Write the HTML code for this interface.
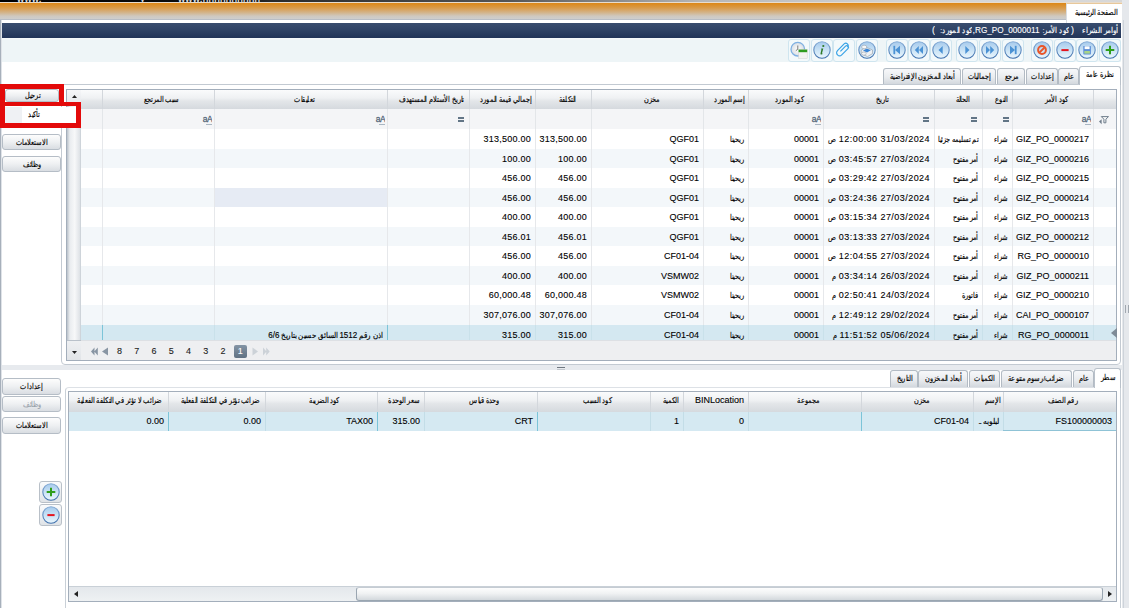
<!DOCTYPE html><html><head><meta charset="utf-8"><style>
*{box-sizing:content-box}
html,body{margin:0;padding:0}
body{width:1129px;height:608px;overflow:hidden;position:relative;background:#fff;font-family:"Liberation Sans",sans-serif;font-size:9px;color:#000}
body>div{position:absolute}
.t{white-space:nowrap;overflow:hidden;-webkit-text-stroke:0.1px currentColor}
.a{font-size:7.6px;display:inline-block;-webkit-text-stroke:0.15px currentColor}
.rtl{direction:rtl}
</style></head><body><div style="left:0px;top:0px;width:1129px;height:2px;background:linear-gradient(90deg,#000 0%,#111 21%,#2a2a2a 24%,#555 45%,#b5b5b5 62%,#d4d4d4 80%,#d8d8d8 100%)"></div>
<div style="left:0px;top:2px;width:1122px;height:1px;background:#e9dccb"></div>
<div style="left:0px;top:3px;width:1122px;height:16px;background:linear-gradient(180deg,#dc8716 0%,#d99a48 30%,#d3b48a 60%,#cfc9c0 82%,#cdcdcd 100%)"></div>
<div style="left:0px;top:19px;width:1122px;height:1px;background:#b9bec5"></div>
<div style="left:0px;top:20px;width:1122px;height:3px;background:#fff"></div>
<div style="left:1122px;top:0px;width:7px;height:608px;background:#e5e8ec"></div>
<div style="left:1123px;top:20px;width:1px;height:588px;background:#cdd3da"></div>
<div style="left:1066px;top:3px;width:56px;height:20px;background:#fff;border-top:1px solid #e8c89a;border-left:1px solid #d9dde2;box-sizing:border-box"></div>
<div class="t" style="left:1066px;top:4px;width:51px;height:16px;line-height:16px;text-align:right;padding-right:5px;direction:rtl"><span class="a" style="transform:scaleX(0.82);transform-origin:100% 50%;font-size:7.8px">الصفحة الرئيسية</span></div>
<div style="left:0px;top:20px;width:1px;height:588px;background:#a7b0bb"></div>
<div style="left:1px;top:20px;width:1px;height:588px;background:#dfe3e8"></div>
<div style="left:2px;top:23px;width:1119px;height:15px;background:linear-gradient(180deg,#394d6e 0%,#2e4265 50%,#213458 100%)"></div>
<div class="t" style="left:918px;top:23px;width:200px;height:15px;line-height:15px;text-align:right;color:#fff;font-size:9px;direction:rtl;"><span class="a" style="transform:scaleX(0.92);transform-origin:100% 50%;font-size:8px">أوامر الشراء</span></div>
<div class="t" style="left:874px;top:23px;width:200px;height:15px;line-height:15px;text-align:right;color:#fff;font-size:9px;">)</div>
<div class="t" style="left:869px;top:23px;width:200px;height:15px;line-height:15px;text-align:right;color:#fff;font-size:9px;direction:rtl;"><span class="a" style="transform:scaleX(0.86);transform-origin:100% 50%;font-size:8px">كود الأمر:</span></div>
<div class="t" style="left:839.5px;top:23px;width:200px;height:15px;line-height:15px;text-align:right;color:#fff;font-size:8.2px;">RG_PO_0000011</div>
<div class="t" style="left:775px;top:23px;width:200px;height:15px;line-height:15px;text-align:right;color:#fff;font-size:9px;">,</div>
<div class="t" style="left:772px;top:23px;width:200px;height:15px;line-height:15px;text-align:right;color:#fff;font-size:9px;direction:rtl;"><span class="a" style="transform:scaleX(0.86);transform-origin:100% 50%;font-size:8px">كود المورد:</span></div>
<div class="t" style="left:735px;top:23px;width:200px;height:15px;line-height:15px;text-align:right;color:#fff;font-size:9px;">(</div>
<div style="left:2px;top:38px;width:1119px;height:24px;background:linear-gradient(180deg,#f6fafb 0px,#eef5f7 2px,#eef5f7 100%)"></div>
<div style="left:1099px;top:39px;width:22px;height:23px;border:1px solid #cfe5ef;border-radius:3px;background:#f3f9fb;box-sizing:border-box"></div>
<svg style="position:absolute;left:1101px;top:41px" width="18" height="18" viewBox="0 0 18 18"><defs><linearGradient id="cg1" x1="0" y1="0" x2="0" y2="1"><stop offset="0" stop-color="#a6caec"/><stop offset="0.55" stop-color="#cce4f6"/><stop offset="1" stop-color="#eaf6fd"/></linearGradient><linearGradient id="cs1" x1="0" y1="0" x2="0" y2="1"><stop offset="0" stop-color="#86acd6"/><stop offset="1" stop-color="#3d6fac"/></linearGradient></defs><circle cx="9" cy="9" r="8.2" fill="url(#cg1)" stroke="url(#cs1)" stroke-width="1.1"/><path d="M8 4.7h2v3.3h3.3v2H10v3.3H8V10H4.7V8H8z" fill="#2f9e1c"/></svg>
<div style="left:1076px;top:39px;width:22px;height:23px;border:1px solid #cfe5ef;border-radius:3px;background:#f3f9fb;box-sizing:border-box"></div>
<svg style="position:absolute;left:1078px;top:41px" width="18" height="18" viewBox="0 0 18 18"><defs><linearGradient id="cg2" x1="0" y1="0" x2="0" y2="1"><stop offset="0" stop-color="#a6caec"/><stop offset="0.55" stop-color="#cce4f6"/><stop offset="1" stop-color="#eaf6fd"/></linearGradient><linearGradient id="cs2" x1="0" y1="0" x2="0" y2="1"><stop offset="0" stop-color="#86acd6"/><stop offset="1" stop-color="#3d6fac"/></linearGradient></defs><circle cx="9" cy="9" r="8.2" fill="url(#cg2)" stroke="url(#cs2)" stroke-width="1.1"/><rect x="5.3" y="5" width="7.6" height="8.4" rx="0.6" fill="#5d8fd8"/><rect x="6.6" y="5.3" width="5" height="2.8" fill="#fff"/><rect x="6.3" y="10" width="5.6" height="2.6" fill="#a8d486"/></svg>
<div style="left:1054px;top:39px;width:22px;height:23px;border:1px solid #cfe5ef;border-radius:3px;background:#f3f9fb;box-sizing:border-box"></div>
<svg style="position:absolute;left:1056px;top:41px" width="18" height="18" viewBox="0 0 18 18"><defs><linearGradient id="cg3" x1="0" y1="0" x2="0" y2="1"><stop offset="0" stop-color="#a6caec"/><stop offset="0.55" stop-color="#cce4f6"/><stop offset="1" stop-color="#eaf6fd"/></linearGradient><linearGradient id="cs3" x1="0" y1="0" x2="0" y2="1"><stop offset="0" stop-color="#86acd6"/><stop offset="1" stop-color="#3d6fac"/></linearGradient></defs><circle cx="9" cy="9" r="8.2" fill="url(#cg3)" stroke="url(#cs3)" stroke-width="1.1"/><rect x="5.4" y="8.1" width="7.2" height="2" fill="#e4151f"/></svg>
<div style="left:1031px;top:39px;width:22px;height:23px;border:1px solid #cfe5ef;border-radius:3px;background:#f3f9fb;box-sizing:border-box"></div>
<svg style="position:absolute;left:1033px;top:41px" width="18" height="18" viewBox="0 0 18 18"><defs><linearGradient id="cg4" x1="0" y1="0" x2="0" y2="1"><stop offset="0" stop-color="#a6caec"/><stop offset="0.55" stop-color="#cce4f6"/><stop offset="1" stop-color="#eaf6fd"/></linearGradient><linearGradient id="cs4" x1="0" y1="0" x2="0" y2="1"><stop offset="0" stop-color="#86acd6"/><stop offset="1" stop-color="#3d6fac"/></linearGradient></defs><circle cx="9" cy="9" r="8.2" fill="url(#cg4)" stroke="url(#cs4)" stroke-width="1.1"/><circle cx="9" cy="9" r="3.9" fill="none" stroke="#e8552a" stroke-width="2"/><path d="M6.5 11.5L11.5 6.5" stroke="#e8552a" stroke-width="1.8"/></svg>
<div style="left:1002px;top:39px;width:22px;height:23px;border:1px solid #cfe5ef;border-radius:3px;background:#f3f9fb;box-sizing:border-box"></div>
<svg style="position:absolute;left:1004px;top:41px" width="18" height="18" viewBox="0 0 18 18"><defs><linearGradient id="cg5" x1="0" y1="0" x2="0" y2="1"><stop offset="0" stop-color="#a6caec"/><stop offset="0.55" stop-color="#cce4f6"/><stop offset="1" stop-color="#eaf6fd"/></linearGradient><linearGradient id="cs5" x1="0" y1="0" x2="0" y2="1"><stop offset="0" stop-color="#86acd6"/><stop offset="1" stop-color="#3d6fac"/></linearGradient></defs><circle cx="9" cy="9" r="8.2" fill="url(#cg5)" stroke="url(#cs5)" stroke-width="1.1"/><path d="M6 4.8l5 4.2-5 4.2z" fill="#4b92d4"/><rect x="10.8" y="4.8" width="1.8" height="8.4" fill="#4b92d4"/></svg>
<div style="left:979px;top:39px;width:22px;height:23px;border:1px solid #cfe5ef;border-radius:3px;background:#f3f9fb;box-sizing:border-box"></div>
<svg style="position:absolute;left:981px;top:41px" width="18" height="18" viewBox="0 0 18 18"><defs><linearGradient id="cg6" x1="0" y1="0" x2="0" y2="1"><stop offset="0" stop-color="#a6caec"/><stop offset="0.55" stop-color="#cce4f6"/><stop offset="1" stop-color="#eaf6fd"/></linearGradient><linearGradient id="cs6" x1="0" y1="0" x2="0" y2="1"><stop offset="0" stop-color="#86acd6"/><stop offset="1" stop-color="#3d6fac"/></linearGradient></defs><circle cx="9" cy="9" r="8.2" fill="url(#cg6)" stroke="url(#cs6)" stroke-width="1.1"/><path d="M5 5l4 4-4 4zM9.2 5l4 4-4 4z" fill="#4b92d4"/></svg>
<div style="left:956px;top:39px;width:22px;height:23px;border:1px solid #cfe5ef;border-radius:3px;background:#f3f9fb;box-sizing:border-box"></div>
<svg style="position:absolute;left:958px;top:41px" width="18" height="18" viewBox="0 0 18 18"><defs><linearGradient id="cg7" x1="0" y1="0" x2="0" y2="1"><stop offset="0" stop-color="#a6caec"/><stop offset="0.55" stop-color="#cce4f6"/><stop offset="1" stop-color="#eaf6fd"/></linearGradient><linearGradient id="cs7" x1="0" y1="0" x2="0" y2="1"><stop offset="0" stop-color="#86acd6"/><stop offset="1" stop-color="#3d6fac"/></linearGradient></defs><circle cx="9" cy="9" r="8.2" fill="url(#cg7)" stroke="url(#cs7)" stroke-width="1.1"/><path d="M7.3 5l4.2 4-4.2 4z" fill="#4b92d4"/></svg>
<div style="left:930px;top:39px;width:22px;height:23px;border:1px solid #cfe5ef;border-radius:3px;background:#f3f9fb;box-sizing:border-box"></div>
<svg style="position:absolute;left:932px;top:41px" width="18" height="18" viewBox="0 0 18 18"><defs><linearGradient id="cg8" x1="0" y1="0" x2="0" y2="1"><stop offset="0" stop-color="#a6caec"/><stop offset="0.55" stop-color="#cce4f6"/><stop offset="1" stop-color="#eaf6fd"/></linearGradient><linearGradient id="cs8" x1="0" y1="0" x2="0" y2="1"><stop offset="0" stop-color="#86acd6"/><stop offset="1" stop-color="#3d6fac"/></linearGradient></defs><circle cx="9" cy="9" r="8.2" fill="url(#cg8)" stroke="url(#cs8)" stroke-width="1.1"/><path d="M10.7 5L6.5 9l4.2 4z" fill="#4b92d4"/></svg>
<div style="left:908px;top:39px;width:22px;height:23px;border:1px solid #cfe5ef;border-radius:3px;background:#f3f9fb;box-sizing:border-box"></div>
<svg style="position:absolute;left:910px;top:41px" width="18" height="18" viewBox="0 0 18 18"><defs><linearGradient id="cg9" x1="0" y1="0" x2="0" y2="1"><stop offset="0" stop-color="#a6caec"/><stop offset="0.55" stop-color="#cce4f6"/><stop offset="1" stop-color="#eaf6fd"/></linearGradient><linearGradient id="cs9" x1="0" y1="0" x2="0" y2="1"><stop offset="0" stop-color="#86acd6"/><stop offset="1" stop-color="#3d6fac"/></linearGradient></defs><circle cx="9" cy="9" r="8.2" fill="url(#cg9)" stroke="url(#cs9)" stroke-width="1.1"/><path d="M13 5L9 9l4 4zM8.8 5L4.8 9l4 4z" fill="#4b92d4"/></svg>
<div style="left:886px;top:39px;width:22px;height:23px;border:1px solid #cfe5ef;border-radius:3px;background:#f3f9fb;box-sizing:border-box"></div>
<svg style="position:absolute;left:888px;top:41px" width="18" height="18" viewBox="0 0 18 18"><defs><linearGradient id="cg10" x1="0" y1="0" x2="0" y2="1"><stop offset="0" stop-color="#a6caec"/><stop offset="0.55" stop-color="#cce4f6"/><stop offset="1" stop-color="#eaf6fd"/></linearGradient><linearGradient id="cs10" x1="0" y1="0" x2="0" y2="1"><stop offset="0" stop-color="#86acd6"/><stop offset="1" stop-color="#3d6fac"/></linearGradient></defs><circle cx="9" cy="9" r="8.2" fill="url(#cg10)" stroke="url(#cs10)" stroke-width="1.1"/><path d="M12 4.8L7 9l5 4.2z" fill="#4b92d4"/><rect x="5.4" y="4.8" width="1.8" height="8.4" fill="#4b92d4"/></svg>
<div style="left:856px;top:39px;width:22px;height:23px;border:1px solid #cfe5ef;border-radius:3px;background:#f3f9fb;box-sizing:border-box"></div>
<svg style="position:absolute;left:858px;top:41px" width="18" height="18" viewBox="0 0 18 18"><defs><linearGradient id="cg11" x1="0" y1="0" x2="0" y2="1"><stop offset="0" stop-color="#a6caec"/><stop offset="0.55" stop-color="#cce4f6"/><stop offset="1" stop-color="#eaf6fd"/></linearGradient><linearGradient id="cs11" x1="0" y1="0" x2="0" y2="1"><stop offset="0" stop-color="#86acd6"/><stop offset="1" stop-color="#3d6fac"/></linearGradient></defs><circle cx="9" cy="9" r="8.2" fill="url(#cg11)" stroke="url(#cs11)" stroke-width="1.1"/><path d="M3.2 9.2l5-3 6.3 2.8v3.6l-5 3-6.3-2.8z" fill="#eef1f4" stroke="#8f99a5" stroke-width="0.6"/><path d="M5 9.6l3.8-2.2 4 1.8-3.8 2.2z" fill="#3a86d8"/><ellipse cx="6.2" cy="6" rx="2.6" ry="1.8" fill="#f6f7f9" stroke="#99a3ae" stroke-width="0.6"/><ellipse cx="5.8" cy="12.6" rx="2.4" ry="1.6" fill="#f0f2f5" stroke="#99a3ae" stroke-width="0.6"/></svg>
<div style="left:833px;top:39px;width:22px;height:23px;border:1px solid #cfe5ef;border-radius:3px;background:#f3f9fb;box-sizing:border-box"></div>
<svg style="position:absolute;left:835px;top:41px" width="18" height="18" viewBox="0 0 18 18"><g transform="rotate(45 9 9)" fill="none" stroke="#3aa3e6" stroke-width="1.2"><path d="M7.4 12.5V5.2a1.7 1.7 0 0 1 3.4 0V14a3 3 0 0 1-6 0V4.6"/><path d="M4.8 4.6a2.3 2.3 0 0 1 4.6 0"/></g></svg>
<div style="left:811px;top:39px;width:22px;height:23px;border:1px solid #cfe5ef;border-radius:3px;background:#f3f9fb;box-sizing:border-box"></div>
<svg style="position:absolute;left:813px;top:41px" width="18" height="18" viewBox="0 0 18 18"><defs><linearGradient id="cg12" x1="0" y1="0" x2="0" y2="1"><stop offset="0" stop-color="#a6caec"/><stop offset="0.55" stop-color="#cce4f6"/><stop offset="1" stop-color="#eaf6fd"/></linearGradient><linearGradient id="cs12" x1="0" y1="0" x2="0" y2="1"><stop offset="0" stop-color="#86acd6"/><stop offset="1" stop-color="#3d6fac"/></linearGradient></defs><circle cx="9" cy="9" r="8.2" fill="url(#cg12)" stroke="url(#cs12)" stroke-width="1.1"/><circle cx="10.3" cy="5" r="1.1" fill="#2f7a28"/><path d="M8.4 7.6h1.9l-1.3 4.6c-0.1 0.5 0.2 0.6 0.9 0.2l0.2 0.4c-1.2 1-2.9 1.1-2.6-0.2l1-4.3h-0.6z" fill="#2f7a28"/></svg>
<div style="left:788px;top:39px;width:22px;height:23px;border:1px solid #cfe5ef;border-radius:3px;background:#f3f9fb;box-sizing:border-box"></div>
<svg style="position:absolute;left:790px;top:41px" width="18" height="18" viewBox="0 0 18 18"><defs><radialGradient id="ckg"><stop offset="0" stop-color="#fff"/><stop offset="1" stop-color="#d9dde3"/></radialGradient></defs><circle cx="7.8" cy="8.2" r="6.8" fill="url(#ckg)" stroke="#7fb0e2" stroke-width="1.3"/><path d="M7.8 4.5v3.7l-2 1.5" stroke="#444" stroke-width="0.7" fill="none"/><rect x="8.6" y="8.6" width="8.6" height="8.8" fill="#f2f2f2" stroke="#d0d0d0" stroke-width="0.5"/><rect x="8.6" y="8.6" width="8.6" height="2.6" fill="#2e9b20"/></svg>
<div style="left:61px;top:84px;width:1060px;height:281px;border:1px solid #c3cad2;border-radius:0 0 4px 4px;box-sizing:border-box;background:#fff"></div>
<div style="left:1079px;top:66px;width:42px;height:19px;background:#fff;border:1px solid #b9c1ca;border-bottom:none;border-radius:3px 3px 0 0;box-sizing:border-box"></div>
<div class="t" style="left:1079px;top:65px;width:42px;height:19px;line-height:19px;text-align:center;direction:rtl"><span class="a" style="transform:scaleX(0.82);transform-origin:50% 50%;font-size:7.6px">نظرة عامة</span></div>
<div style="left:1058px;top:68px;width:21px;height:16px;background:linear-gradient(180deg,#f7f8fa 0%,#e9ecef 55%,#d3d8de 100%);border:1px solid #b3bbc4;border-bottom:none;border-radius:3px 3px 0 0;box-sizing:border-box"></div>
<div class="t" style="left:1058px;top:68px;width:21px;height:16px;line-height:16px;text-align:center;direction:rtl"><span class="a" style="transform:scaleX(0.82);transform-origin:50% 50%;font-size:7.6px">عام</span></div>
<div style="left:1026px;top:68px;width:32px;height:16px;background:linear-gradient(180deg,#f7f8fa 0%,#e9ecef 55%,#d3d8de 100%);border:1px solid #b3bbc4;border-bottom:none;border-radius:3px 3px 0 0;box-sizing:border-box"></div>
<div class="t" style="left:1026px;top:68px;width:32px;height:16px;line-height:16px;text-align:center;direction:rtl"><span class="a" style="transform:scaleX(0.82);transform-origin:50% 50%;font-size:7.6px">إعدادات</span></div>
<div style="left:997px;top:68px;width:28px;height:16px;background:linear-gradient(180deg,#f7f8fa 0%,#e9ecef 55%,#d3d8de 100%);border:1px solid #b3bbc4;border-bottom:none;border-radius:3px 3px 0 0;box-sizing:border-box"></div>
<div class="t" style="left:997px;top:68px;width:28px;height:16px;line-height:16px;text-align:center;direction:rtl"><span class="a" style="transform:scaleX(0.82);transform-origin:50% 50%;font-size:7.6px">مرجع</span></div>
<div style="left:962px;top:68px;width:34px;height:16px;background:linear-gradient(180deg,#f7f8fa 0%,#e9ecef 55%,#d3d8de 100%);border:1px solid #b3bbc4;border-bottom:none;border-radius:3px 3px 0 0;box-sizing:border-box"></div>
<div class="t" style="left:962px;top:68px;width:34px;height:16px;line-height:16px;text-align:center;direction:rtl"><span class="a" style="transform:scaleX(0.82);transform-origin:50% 50%;font-size:7.6px">إجماليات</span></div>
<div style="left:883px;top:68px;width:78px;height:16px;background:linear-gradient(180deg,#f7f8fa 0%,#e9ecef 55%,#d3d8de 100%);border:1px solid #b3bbc4;border-bottom:none;border-radius:3px 3px 0 0;box-sizing:border-box"></div>
<div class="t" style="left:883px;top:68px;width:78px;height:16px;line-height:16px;text-align:center;direction:rtl"><span class="a" style="transform:scaleX(0.82);transform-origin:50% 50%;font-size:7.6px">أبعاد المخزون الإفتراضية</span></div>
<div style="left:66px;top:89px;width:1051px;height:272px;border:1px solid #a3aebb;box-sizing:border-box;background:#fff"></div>
<div style="left:81px;top:90px;width:1035px;height:19px;background:linear-gradient(180deg,#fafbfc 0%,#eff1f3 42%,#e3e6e9 58%,#d5d9de 100%)"></div>
<div style="left:81px;top:109px;width:1035px;height:20px;background:#f4f5f7"></div>
<div style="left:81px;top:129px;width:1035px;height:1px;background:#dfe2e6"></div>
<div style="left:102px;top:90px;width:1px;height:19px;background:#d3d7dc"></div>
<div style="left:102px;top:109px;width:1px;height:20px;background:#e3e6e9"></div>
<div style="left:214px;top:90px;width:1px;height:19px;background:#d3d7dc"></div>
<div style="left:214px;top:109px;width:1px;height:20px;background:#e3e6e9"></div>
<div style="left:387px;top:90px;width:1px;height:19px;background:#d3d7dc"></div>
<div style="left:387px;top:109px;width:1px;height:20px;background:#e3e6e9"></div>
<div style="left:469px;top:90px;width:1px;height:19px;background:#d3d7dc"></div>
<div style="left:469px;top:109px;width:1px;height:20px;background:#e3e6e9"></div>
<div style="left:535px;top:90px;width:1px;height:19px;background:#d3d7dc"></div>
<div style="left:535px;top:109px;width:1px;height:20px;background:#e3e6e9"></div>
<div style="left:591px;top:90px;width:1px;height:19px;background:#d3d7dc"></div>
<div style="left:591px;top:109px;width:1px;height:20px;background:#e3e6e9"></div>
<div style="left:703px;top:90px;width:1px;height:19px;background:#d3d7dc"></div>
<div style="left:703px;top:109px;width:1px;height:20px;background:#e3e6e9"></div>
<div style="left:748px;top:90px;width:1px;height:19px;background:#d3d7dc"></div>
<div style="left:748px;top:109px;width:1px;height:20px;background:#e3e6e9"></div>
<div style="left:823px;top:90px;width:1px;height:19px;background:#d3d7dc"></div>
<div style="left:823px;top:109px;width:1px;height:20px;background:#e3e6e9"></div>
<div style="left:934px;top:90px;width:1px;height:19px;background:#d3d7dc"></div>
<div style="left:934px;top:109px;width:1px;height:20px;background:#e3e6e9"></div>
<div style="left:982px;top:90px;width:1px;height:19px;background:#d3d7dc"></div>
<div style="left:982px;top:109px;width:1px;height:20px;background:#e3e6e9"></div>
<div style="left:1012px;top:90px;width:1px;height:19px;background:#d3d7dc"></div>
<div style="left:1012px;top:109px;width:1px;height:20px;background:#e3e6e9"></div>
<div style="left:1093px;top:90px;width:1px;height:19px;background:#d3d7dc"></div>
<div style="left:1093px;top:109px;width:1px;height:20px;background:#e3e6e9"></div>
<div class="t" style="left:106px;top:90px;width:112px;height:19px;line-height:19px;text-align:center;direction:rtl"><span class="a" style="transform:scaleX(0.82);transform-origin:50% 50%;">سبب المرتجع</span></div>
<div class="t" style="left:218px;top:90px;width:173px;height:19px;line-height:19px;text-align:center;direction:rtl"><span class="a" style="transform:scaleX(0.82);transform-origin:50% 50%;">تعليقات</span></div>
<div class="t" style="left:391px;top:90px;width:82px;height:19px;line-height:19px;text-align:center;direction:rtl"><span class="a" style="transform:scaleX(0.82);transform-origin:50% 50%;">تاريخ الأستلام المستهدف</span></div>
<div class="t" style="left:473px;top:90px;width:66px;height:19px;line-height:19px;text-align:center;direction:rtl"><span class="a" style="transform:scaleX(0.82);transform-origin:50% 50%;">إجمالي قيمة المورد</span></div>
<div class="t" style="left:539px;top:90px;width:56px;height:19px;line-height:19px;text-align:center;direction:rtl"><span class="a" style="transform:scaleX(0.82);transform-origin:50% 50%;">التكلفة</span></div>
<div class="t" style="left:595px;top:90px;width:112px;height:19px;line-height:19px;text-align:center;direction:rtl"><span class="a" style="transform:scaleX(0.82);transform-origin:50% 50%;">مخزن</span></div>
<div class="t" style="left:707px;top:90px;width:45px;height:19px;line-height:19px;text-align:center;direction:rtl"><span class="a" style="transform:scaleX(0.82);transform-origin:50% 50%;">إسم المورد</span></div>
<div class="t" style="left:752px;top:90px;width:75px;height:19px;line-height:19px;text-align:center;direction:rtl"><span class="a" style="transform:scaleX(0.82);transform-origin:50% 50%;">كود المورد</span></div>
<div class="t" style="left:827px;top:90px;width:111px;height:19px;line-height:19px;text-align:center;direction:rtl"><span class="a" style="transform:scaleX(0.82);transform-origin:50% 50%;">تاريخ</span></div>
<div class="t" style="left:938px;top:90px;width:48px;height:19px;line-height:19px;text-align:center;direction:rtl"><span class="a" style="transform:scaleX(0.82);transform-origin:50% 50%;">الحالة</span></div>
<div class="t" style="left:986px;top:90px;width:30px;height:19px;line-height:19px;text-align:center;direction:rtl"><span class="a" style="transform:scaleX(0.82);transform-origin:50% 50%;">النوع</span></div>
<div class="t" style="left:1016px;top:90px;width:81px;height:19px;line-height:19px;text-align:center;direction:rtl"><span class="a" style="transform:scaleX(0.82);transform-origin:50% 50%;">كود الأمر</span></div>
<div class="t" style="left:200px;top:114px;width:12px;height:10px;line-height:10px;text-align:right;color:#56687a;font-size:8.5px;letter-spacing:-0.6px;-webkit-text-stroke:0.3px #56687a">aA</div>
<div style="left:206px;top:123.5px;width:6px;height:1px;background:#a9b6c2"></div>
<div class="t" style="left:373px;top:114px;width:12px;height:10px;line-height:10px;text-align:right;color:#56687a;font-size:8.5px;letter-spacing:-0.6px;-webkit-text-stroke:0.3px #56687a">aA</div>
<div style="left:379px;top:123.5px;width:6px;height:1px;background:#a9b6c2"></div>
<div style="left:457.5px;top:117.4px;width:6.5px;height:1.6px;background:#627586"></div>
<div style="left:457.5px;top:120.2px;width:6.5px;height:1.6px;background:#627586"></div>
<div class="t" style="left:809px;top:114px;width:12px;height:10px;line-height:10px;text-align:right;color:#56687a;font-size:8.5px;letter-spacing:-0.6px;-webkit-text-stroke:0.3px #56687a">aA</div>
<div style="left:815px;top:123.5px;width:6px;height:1px;background:#a9b6c2"></div>
<div style="left:922.5px;top:117.4px;width:6.5px;height:1.6px;background:#627586"></div>
<div style="left:922.5px;top:120.2px;width:6.5px;height:1.6px;background:#627586"></div>
<div style="left:970.5px;top:117.4px;width:6.5px;height:1.6px;background:#627586"></div>
<div style="left:970.5px;top:120.2px;width:6.5px;height:1.6px;background:#627586"></div>
<div style="left:1002.5px;top:117.4px;width:6.5px;height:1.6px;background:#627586"></div>
<div style="left:1002.5px;top:120.2px;width:6.5px;height:1.6px;background:#627586"></div>
<div class="t" style="left:1079px;top:114px;width:12px;height:10px;line-height:10px;text-align:right;color:#56687a;font-size:8.5px;letter-spacing:-0.6px;-webkit-text-stroke:0.3px #56687a">aA</div>
<div style="left:1085px;top:123.5px;width:6px;height:1px;background:#a9b6c2"></div>
<svg style="position:absolute;left:1098.5px;top:115.5px" width="10" height="9" viewBox="0 0 10 9"><path d="M2.3 0.6h7.2L6.9 3.2v3.6H4.9V3.2z" fill="none" stroke="#6f7d8b" stroke-width="1"/><path d="M0 5.6l2.6-2.3v5z" fill="#6f7d8b"/></svg>
<div style="left:81px;top:129px;width:1035px;height:20px;background:#ffffff"></div>
<div style="left:102px;top:129px;width:1px;height:20px;background:#e6e8eb"></div>
<div style="left:214px;top:129px;width:1px;height:20px;background:#e6e8eb"></div>
<div style="left:387px;top:129px;width:1px;height:20px;background:#e6e8eb"></div>
<div style="left:469px;top:129px;width:1px;height:20px;background:#e6e8eb"></div>
<div style="left:535px;top:129px;width:1px;height:20px;background:#e6e8eb"></div>
<div style="left:591px;top:129px;width:1px;height:20px;background:#e6e8eb"></div>
<div style="left:703px;top:129px;width:1px;height:20px;background:#e6e8eb"></div>
<div style="left:748px;top:129px;width:1px;height:20px;background:#e6e8eb"></div>
<div style="left:823px;top:129px;width:1px;height:20px;background:#e6e8eb"></div>
<div style="left:934px;top:129px;width:1px;height:20px;background:#e6e8eb"></div>
<div style="left:982px;top:129px;width:1px;height:20px;background:#e6e8eb"></div>
<div style="left:1012px;top:129px;width:1px;height:20px;background:#e6e8eb"></div>
<div style="left:1093px;top:129px;width:1px;height:20px;background:#e6e8eb"></div>
<div class="t" style="left:1013px;top:129px;width:76px;height:20px;line-height:20px;text-align:right;padding-right:4px;">GIZ_PO_0000217</div>
<div class="t" style="left:983px;top:129px;width:25px;height:20px;line-height:20px;text-align:right;padding-right:4px;direction:rtl;"><span class="a" style="transform:scaleX(0.82);transform-origin:100% 50%;">شراء</span></div>
<div class="t" style="left:935px;top:129px;width:43px;height:20px;line-height:20px;text-align:right;padding-right:4px;direction:rtl;"><span class="a" style="transform:scaleX(0.82);transform-origin:100% 50%;">تم تسليمه جزئيا</span></div>
<div class="t" style="left:824px;top:129px;width:106px;height:20px;line-height:20px;text-align:right;padding-right:4px;"><span style="unicode-bidi:bidi-override;direction:ltr;letter-spacing:0.45px"><span class="a" style="transform:scaleX(0.82);transform-origin:100% 50%;">ص</span> 12:00:00 31/03/2024</span></div>
<div class="t" style="left:749px;top:129px;width:70px;height:20px;line-height:20px;text-align:right;padding-right:4px;">00001</div>
<div class="t" style="left:704px;top:129px;width:40px;height:20px;line-height:20px;text-align:right;padding-right:4px;direction:rtl;"><span class="a" style="transform:scaleX(0.82);transform-origin:100% 50%;">ريحينا</span></div>
<div class="t" style="left:592px;top:129px;width:107px;height:20px;line-height:20px;text-align:right;padding-right:4px;">QGF01</div>
<div class="t" style="left:536px;top:129px;width:51px;height:20px;line-height:20px;text-align:right;padding-right:4px;letter-spacing:0.25px;">313,500.00</div>
<div class="t" style="left:470px;top:129px;width:61px;height:20px;line-height:20px;text-align:right;padding-right:4px;letter-spacing:0.25px;">313,500.00</div>
<div style="left:81px;top:149px;width:1035px;height:19px;background:#f3f7fa"></div>
<div style="left:102px;top:149px;width:1px;height:19px;background:#e6e8eb"></div>
<div style="left:214px;top:149px;width:1px;height:19px;background:#e6e8eb"></div>
<div style="left:387px;top:149px;width:1px;height:19px;background:#e6e8eb"></div>
<div style="left:469px;top:149px;width:1px;height:19px;background:#e6e8eb"></div>
<div style="left:535px;top:149px;width:1px;height:19px;background:#e6e8eb"></div>
<div style="left:591px;top:149px;width:1px;height:19px;background:#e6e8eb"></div>
<div style="left:703px;top:149px;width:1px;height:19px;background:#e6e8eb"></div>
<div style="left:748px;top:149px;width:1px;height:19px;background:#e6e8eb"></div>
<div style="left:823px;top:149px;width:1px;height:19px;background:#e6e8eb"></div>
<div style="left:934px;top:149px;width:1px;height:19px;background:#e6e8eb"></div>
<div style="left:982px;top:149px;width:1px;height:19px;background:#e6e8eb"></div>
<div style="left:1012px;top:149px;width:1px;height:19px;background:#e6e8eb"></div>
<div style="left:1093px;top:149px;width:1px;height:19px;background:#e6e8eb"></div>
<div class="t" style="left:1013px;top:149px;width:76px;height:20px;line-height:20px;text-align:right;padding-right:4px;">GIZ_PO_0000216</div>
<div class="t" style="left:983px;top:149px;width:25px;height:20px;line-height:20px;text-align:right;padding-right:4px;direction:rtl;"><span class="a" style="transform:scaleX(0.82);transform-origin:100% 50%;">شراء</span></div>
<div class="t" style="left:935px;top:149px;width:43px;height:20px;line-height:20px;text-align:right;padding-right:4px;direction:rtl;"><span class="a" style="transform:scaleX(0.82);transform-origin:100% 50%;">أمر مفتوح</span></div>
<div class="t" style="left:824px;top:149px;width:106px;height:20px;line-height:20px;text-align:right;padding-right:4px;"><span style="unicode-bidi:bidi-override;direction:ltr;letter-spacing:0.45px"><span class="a" style="transform:scaleX(0.82);transform-origin:100% 50%;">ص</span> 03:45:57 27/03/2024</span></div>
<div class="t" style="left:749px;top:149px;width:70px;height:20px;line-height:20px;text-align:right;padding-right:4px;">00001</div>
<div class="t" style="left:704px;top:149px;width:40px;height:20px;line-height:20px;text-align:right;padding-right:4px;direction:rtl;"><span class="a" style="transform:scaleX(0.82);transform-origin:100% 50%;">ريحينا</span></div>
<div class="t" style="left:592px;top:149px;width:107px;height:20px;line-height:20px;text-align:right;padding-right:4px;">QGF01</div>
<div class="t" style="left:536px;top:149px;width:51px;height:20px;line-height:20px;text-align:right;padding-right:4px;letter-spacing:0.25px;">100.00</div>
<div class="t" style="left:470px;top:149px;width:61px;height:20px;line-height:20px;text-align:right;padding-right:4px;letter-spacing:0.25px;">100.00</div>
<div style="left:81px;top:168px;width:1035px;height:20px;background:#ffffff"></div>
<div style="left:102px;top:168px;width:1px;height:20px;background:#e6e8eb"></div>
<div style="left:214px;top:168px;width:1px;height:20px;background:#e6e8eb"></div>
<div style="left:387px;top:168px;width:1px;height:20px;background:#e6e8eb"></div>
<div style="left:469px;top:168px;width:1px;height:20px;background:#e6e8eb"></div>
<div style="left:535px;top:168px;width:1px;height:20px;background:#e6e8eb"></div>
<div style="left:591px;top:168px;width:1px;height:20px;background:#e6e8eb"></div>
<div style="left:703px;top:168px;width:1px;height:20px;background:#e6e8eb"></div>
<div style="left:748px;top:168px;width:1px;height:20px;background:#e6e8eb"></div>
<div style="left:823px;top:168px;width:1px;height:20px;background:#e6e8eb"></div>
<div style="left:934px;top:168px;width:1px;height:20px;background:#e6e8eb"></div>
<div style="left:982px;top:168px;width:1px;height:20px;background:#e6e8eb"></div>
<div style="left:1012px;top:168px;width:1px;height:20px;background:#e6e8eb"></div>
<div style="left:1093px;top:168px;width:1px;height:20px;background:#e6e8eb"></div>
<div class="t" style="left:1013px;top:168px;width:76px;height:20px;line-height:20px;text-align:right;padding-right:4px;">GIZ_PO_0000215</div>
<div class="t" style="left:983px;top:168px;width:25px;height:20px;line-height:20px;text-align:right;padding-right:4px;direction:rtl;"><span class="a" style="transform:scaleX(0.82);transform-origin:100% 50%;">شراء</span></div>
<div class="t" style="left:935px;top:168px;width:43px;height:20px;line-height:20px;text-align:right;padding-right:4px;direction:rtl;"><span class="a" style="transform:scaleX(0.82);transform-origin:100% 50%;">أمر مفتوح</span></div>
<div class="t" style="left:824px;top:168px;width:106px;height:20px;line-height:20px;text-align:right;padding-right:4px;"><span style="unicode-bidi:bidi-override;direction:ltr;letter-spacing:0.45px"><span class="a" style="transform:scaleX(0.82);transform-origin:100% 50%;">ص</span> 03:29:42 27/03/2024</span></div>
<div class="t" style="left:749px;top:168px;width:70px;height:20px;line-height:20px;text-align:right;padding-right:4px;">00001</div>
<div class="t" style="left:704px;top:168px;width:40px;height:20px;line-height:20px;text-align:right;padding-right:4px;direction:rtl;"><span class="a" style="transform:scaleX(0.82);transform-origin:100% 50%;">ريحينا</span></div>
<div class="t" style="left:592px;top:168px;width:107px;height:20px;line-height:20px;text-align:right;padding-right:4px;">QGF01</div>
<div class="t" style="left:536px;top:168px;width:51px;height:20px;line-height:20px;text-align:right;padding-right:4px;letter-spacing:0.25px;">456.00</div>
<div class="t" style="left:470px;top:168px;width:61px;height:20px;line-height:20px;text-align:right;padding-right:4px;letter-spacing:0.25px;">456.00</div>
<div style="left:81px;top:188px;width:1035px;height:19px;background:#f3f7fa"></div>
<div style="left:215px;top:188px;width:172px;height:19px;background:#e6ebf4"></div>
<div style="left:102px;top:188px;width:1px;height:19px;background:#e6e8eb"></div>
<div style="left:214px;top:188px;width:1px;height:19px;background:#e6e8eb"></div>
<div style="left:387px;top:188px;width:1px;height:19px;background:#e6e8eb"></div>
<div style="left:469px;top:188px;width:1px;height:19px;background:#e6e8eb"></div>
<div style="left:535px;top:188px;width:1px;height:19px;background:#e6e8eb"></div>
<div style="left:591px;top:188px;width:1px;height:19px;background:#e6e8eb"></div>
<div style="left:703px;top:188px;width:1px;height:19px;background:#e6e8eb"></div>
<div style="left:748px;top:188px;width:1px;height:19px;background:#e6e8eb"></div>
<div style="left:823px;top:188px;width:1px;height:19px;background:#e6e8eb"></div>
<div style="left:934px;top:188px;width:1px;height:19px;background:#e6e8eb"></div>
<div style="left:982px;top:188px;width:1px;height:19px;background:#e6e8eb"></div>
<div style="left:1012px;top:188px;width:1px;height:19px;background:#e6e8eb"></div>
<div style="left:1093px;top:188px;width:1px;height:19px;background:#e6e8eb"></div>
<div class="t" style="left:1013px;top:188px;width:76px;height:20px;line-height:20px;text-align:right;padding-right:4px;">GIZ_PO_0000214</div>
<div class="t" style="left:983px;top:188px;width:25px;height:20px;line-height:20px;text-align:right;padding-right:4px;direction:rtl;"><span class="a" style="transform:scaleX(0.82);transform-origin:100% 50%;">شراء</span></div>
<div class="t" style="left:935px;top:188px;width:43px;height:20px;line-height:20px;text-align:right;padding-right:4px;direction:rtl;"><span class="a" style="transform:scaleX(0.82);transform-origin:100% 50%;">أمر مفتوح</span></div>
<div class="t" style="left:824px;top:188px;width:106px;height:20px;line-height:20px;text-align:right;padding-right:4px;"><span style="unicode-bidi:bidi-override;direction:ltr;letter-spacing:0.45px"><span class="a" style="transform:scaleX(0.82);transform-origin:100% 50%;">ص</span> 03:24:36 27/03/2024</span></div>
<div class="t" style="left:749px;top:188px;width:70px;height:20px;line-height:20px;text-align:right;padding-right:4px;">00001</div>
<div class="t" style="left:704px;top:188px;width:40px;height:20px;line-height:20px;text-align:right;padding-right:4px;direction:rtl;"><span class="a" style="transform:scaleX(0.82);transform-origin:100% 50%;">ريحينا</span></div>
<div class="t" style="left:592px;top:188px;width:107px;height:20px;line-height:20px;text-align:right;padding-right:4px;">QGF01</div>
<div class="t" style="left:536px;top:188px;width:51px;height:20px;line-height:20px;text-align:right;padding-right:4px;letter-spacing:0.25px;">456.00</div>
<div class="t" style="left:470px;top:188px;width:61px;height:20px;line-height:20px;text-align:right;padding-right:4px;letter-spacing:0.25px;">456.00</div>
<div style="left:81px;top:207px;width:1035px;height:20px;background:#ffffff"></div>
<div style="left:102px;top:207px;width:1px;height:20px;background:#e6e8eb"></div>
<div style="left:214px;top:207px;width:1px;height:20px;background:#e6e8eb"></div>
<div style="left:387px;top:207px;width:1px;height:20px;background:#e6e8eb"></div>
<div style="left:469px;top:207px;width:1px;height:20px;background:#e6e8eb"></div>
<div style="left:535px;top:207px;width:1px;height:20px;background:#e6e8eb"></div>
<div style="left:591px;top:207px;width:1px;height:20px;background:#e6e8eb"></div>
<div style="left:703px;top:207px;width:1px;height:20px;background:#e6e8eb"></div>
<div style="left:748px;top:207px;width:1px;height:20px;background:#e6e8eb"></div>
<div style="left:823px;top:207px;width:1px;height:20px;background:#e6e8eb"></div>
<div style="left:934px;top:207px;width:1px;height:20px;background:#e6e8eb"></div>
<div style="left:982px;top:207px;width:1px;height:20px;background:#e6e8eb"></div>
<div style="left:1012px;top:207px;width:1px;height:20px;background:#e6e8eb"></div>
<div style="left:1093px;top:207px;width:1px;height:20px;background:#e6e8eb"></div>
<div class="t" style="left:1013px;top:207px;width:76px;height:20px;line-height:20px;text-align:right;padding-right:4px;">GIZ_PO_0000213</div>
<div class="t" style="left:983px;top:207px;width:25px;height:20px;line-height:20px;text-align:right;padding-right:4px;direction:rtl;"><span class="a" style="transform:scaleX(0.82);transform-origin:100% 50%;">شراء</span></div>
<div class="t" style="left:935px;top:207px;width:43px;height:20px;line-height:20px;text-align:right;padding-right:4px;direction:rtl;"><span class="a" style="transform:scaleX(0.82);transform-origin:100% 50%;">أمر مفتوح</span></div>
<div class="t" style="left:824px;top:207px;width:106px;height:20px;line-height:20px;text-align:right;padding-right:4px;"><span style="unicode-bidi:bidi-override;direction:ltr;letter-spacing:0.45px"><span class="a" style="transform:scaleX(0.82);transform-origin:100% 50%;">ص</span> 03:15:34 27/03/2024</span></div>
<div class="t" style="left:749px;top:207px;width:70px;height:20px;line-height:20px;text-align:right;padding-right:4px;">00001</div>
<div class="t" style="left:704px;top:207px;width:40px;height:20px;line-height:20px;text-align:right;padding-right:4px;direction:rtl;"><span class="a" style="transform:scaleX(0.82);transform-origin:100% 50%;">ريحينا</span></div>
<div class="t" style="left:592px;top:207px;width:107px;height:20px;line-height:20px;text-align:right;padding-right:4px;">QGF01</div>
<div class="t" style="left:536px;top:207px;width:51px;height:20px;line-height:20px;text-align:right;padding-right:4px;letter-spacing:0.25px;">400.00</div>
<div class="t" style="left:470px;top:207px;width:61px;height:20px;line-height:20px;text-align:right;padding-right:4px;letter-spacing:0.25px;">400.00</div>
<div style="left:81px;top:227px;width:1035px;height:19px;background:#f3f7fa"></div>
<div style="left:102px;top:227px;width:1px;height:19px;background:#e6e8eb"></div>
<div style="left:214px;top:227px;width:1px;height:19px;background:#e6e8eb"></div>
<div style="left:387px;top:227px;width:1px;height:19px;background:#e6e8eb"></div>
<div style="left:469px;top:227px;width:1px;height:19px;background:#e6e8eb"></div>
<div style="left:535px;top:227px;width:1px;height:19px;background:#e6e8eb"></div>
<div style="left:591px;top:227px;width:1px;height:19px;background:#e6e8eb"></div>
<div style="left:703px;top:227px;width:1px;height:19px;background:#e6e8eb"></div>
<div style="left:748px;top:227px;width:1px;height:19px;background:#e6e8eb"></div>
<div style="left:823px;top:227px;width:1px;height:19px;background:#e6e8eb"></div>
<div style="left:934px;top:227px;width:1px;height:19px;background:#e6e8eb"></div>
<div style="left:982px;top:227px;width:1px;height:19px;background:#e6e8eb"></div>
<div style="left:1012px;top:227px;width:1px;height:19px;background:#e6e8eb"></div>
<div style="left:1093px;top:227px;width:1px;height:19px;background:#e6e8eb"></div>
<div class="t" style="left:1013px;top:227px;width:76px;height:20px;line-height:20px;text-align:right;padding-right:4px;">GIZ_PO_0000212</div>
<div class="t" style="left:983px;top:227px;width:25px;height:20px;line-height:20px;text-align:right;padding-right:4px;direction:rtl;"><span class="a" style="transform:scaleX(0.82);transform-origin:100% 50%;">شراء</span></div>
<div class="t" style="left:935px;top:227px;width:43px;height:20px;line-height:20px;text-align:right;padding-right:4px;direction:rtl;"><span class="a" style="transform:scaleX(0.82);transform-origin:100% 50%;">أمر مفتوح</span></div>
<div class="t" style="left:824px;top:227px;width:106px;height:20px;line-height:20px;text-align:right;padding-right:4px;"><span style="unicode-bidi:bidi-override;direction:ltr;letter-spacing:0.45px"><span class="a" style="transform:scaleX(0.82);transform-origin:100% 50%;">ص</span> 03:13:33 27/03/2024</span></div>
<div class="t" style="left:749px;top:227px;width:70px;height:20px;line-height:20px;text-align:right;padding-right:4px;">00001</div>
<div class="t" style="left:704px;top:227px;width:40px;height:20px;line-height:20px;text-align:right;padding-right:4px;direction:rtl;"><span class="a" style="transform:scaleX(0.82);transform-origin:100% 50%;">ريحينا</span></div>
<div class="t" style="left:592px;top:227px;width:107px;height:20px;line-height:20px;text-align:right;padding-right:4px;">QGF01</div>
<div class="t" style="left:536px;top:227px;width:51px;height:20px;line-height:20px;text-align:right;padding-right:4px;letter-spacing:0.25px;">456.01</div>
<div class="t" style="left:470px;top:227px;width:61px;height:20px;line-height:20px;text-align:right;padding-right:4px;letter-spacing:0.25px;">456.01</div>
<div style="left:81px;top:246px;width:1035px;height:20px;background:#ffffff"></div>
<div style="left:102px;top:246px;width:1px;height:20px;background:#e6e8eb"></div>
<div style="left:214px;top:246px;width:1px;height:20px;background:#e6e8eb"></div>
<div style="left:387px;top:246px;width:1px;height:20px;background:#e6e8eb"></div>
<div style="left:469px;top:246px;width:1px;height:20px;background:#e6e8eb"></div>
<div style="left:535px;top:246px;width:1px;height:20px;background:#e6e8eb"></div>
<div style="left:591px;top:246px;width:1px;height:20px;background:#e6e8eb"></div>
<div style="left:703px;top:246px;width:1px;height:20px;background:#e6e8eb"></div>
<div style="left:748px;top:246px;width:1px;height:20px;background:#e6e8eb"></div>
<div style="left:823px;top:246px;width:1px;height:20px;background:#e6e8eb"></div>
<div style="left:934px;top:246px;width:1px;height:20px;background:#e6e8eb"></div>
<div style="left:982px;top:246px;width:1px;height:20px;background:#e6e8eb"></div>
<div style="left:1012px;top:246px;width:1px;height:20px;background:#e6e8eb"></div>
<div style="left:1093px;top:246px;width:1px;height:20px;background:#e6e8eb"></div>
<div class="t" style="left:1013px;top:246px;width:76px;height:20px;line-height:20px;text-align:right;padding-right:4px;">RG_PO_0000010</div>
<div class="t" style="left:983px;top:246px;width:25px;height:20px;line-height:20px;text-align:right;padding-right:4px;direction:rtl;"><span class="a" style="transform:scaleX(0.82);transform-origin:100% 50%;">شراء</span></div>
<div class="t" style="left:935px;top:246px;width:43px;height:20px;line-height:20px;text-align:right;padding-right:4px;direction:rtl;"><span class="a" style="transform:scaleX(0.82);transform-origin:100% 50%;">أمر مفتوح</span></div>
<div class="t" style="left:824px;top:246px;width:106px;height:20px;line-height:20px;text-align:right;padding-right:4px;"><span style="unicode-bidi:bidi-override;direction:ltr;letter-spacing:0.45px"><span class="a" style="transform:scaleX(0.82);transform-origin:100% 50%;">ص</span> 12:04:55 27/03/2024</span></div>
<div class="t" style="left:749px;top:246px;width:70px;height:20px;line-height:20px;text-align:right;padding-right:4px;">00001</div>
<div class="t" style="left:704px;top:246px;width:40px;height:20px;line-height:20px;text-align:right;padding-right:4px;direction:rtl;"><span class="a" style="transform:scaleX(0.82);transform-origin:100% 50%;">ريحينا</span></div>
<div class="t" style="left:592px;top:246px;width:107px;height:20px;line-height:20px;text-align:right;padding-right:4px;">CF01-04</div>
<div class="t" style="left:536px;top:246px;width:51px;height:20px;line-height:20px;text-align:right;padding-right:4px;letter-spacing:0.25px;">456.00</div>
<div class="t" style="left:470px;top:246px;width:61px;height:20px;line-height:20px;text-align:right;padding-right:4px;letter-spacing:0.25px;">456.00</div>
<div style="left:81px;top:266px;width:1035px;height:19px;background:#f3f7fa"></div>
<div style="left:102px;top:266px;width:1px;height:19px;background:#e6e8eb"></div>
<div style="left:214px;top:266px;width:1px;height:19px;background:#e6e8eb"></div>
<div style="left:387px;top:266px;width:1px;height:19px;background:#e6e8eb"></div>
<div style="left:469px;top:266px;width:1px;height:19px;background:#e6e8eb"></div>
<div style="left:535px;top:266px;width:1px;height:19px;background:#e6e8eb"></div>
<div style="left:591px;top:266px;width:1px;height:19px;background:#e6e8eb"></div>
<div style="left:703px;top:266px;width:1px;height:19px;background:#e6e8eb"></div>
<div style="left:748px;top:266px;width:1px;height:19px;background:#e6e8eb"></div>
<div style="left:823px;top:266px;width:1px;height:19px;background:#e6e8eb"></div>
<div style="left:934px;top:266px;width:1px;height:19px;background:#e6e8eb"></div>
<div style="left:982px;top:266px;width:1px;height:19px;background:#e6e8eb"></div>
<div style="left:1012px;top:266px;width:1px;height:19px;background:#e6e8eb"></div>
<div style="left:1093px;top:266px;width:1px;height:19px;background:#e6e8eb"></div>
<div class="t" style="left:1013px;top:266px;width:76px;height:20px;line-height:20px;text-align:right;padding-right:4px;">GIZ_PO_0000211</div>
<div class="t" style="left:983px;top:266px;width:25px;height:20px;line-height:20px;text-align:right;padding-right:4px;direction:rtl;"><span class="a" style="transform:scaleX(0.82);transform-origin:100% 50%;">شراء</span></div>
<div class="t" style="left:935px;top:266px;width:43px;height:20px;line-height:20px;text-align:right;padding-right:4px;direction:rtl;"><span class="a" style="transform:scaleX(0.82);transform-origin:100% 50%;">أمر مفتوح</span></div>
<div class="t" style="left:824px;top:266px;width:106px;height:20px;line-height:20px;text-align:right;padding-right:4px;"><span style="unicode-bidi:bidi-override;direction:ltr;letter-spacing:0.45px"><span class="a" style="transform:scaleX(0.82);transform-origin:100% 50%;">م</span> 03:34:14 26/03/2024</span></div>
<div class="t" style="left:749px;top:266px;width:70px;height:20px;line-height:20px;text-align:right;padding-right:4px;">00001</div>
<div class="t" style="left:704px;top:266px;width:40px;height:20px;line-height:20px;text-align:right;padding-right:4px;direction:rtl;"><span class="a" style="transform:scaleX(0.82);transform-origin:100% 50%;">ريحينا</span></div>
<div class="t" style="left:592px;top:266px;width:107px;height:20px;line-height:20px;text-align:right;padding-right:4px;">VSMW02</div>
<div class="t" style="left:536px;top:266px;width:51px;height:20px;line-height:20px;text-align:right;padding-right:4px;letter-spacing:0.25px;">400.00</div>
<div class="t" style="left:470px;top:266px;width:61px;height:20px;line-height:20px;text-align:right;padding-right:4px;letter-spacing:0.25px;">400.00</div>
<div style="left:81px;top:285px;width:1035px;height:20px;background:#ffffff"></div>
<div style="left:102px;top:285px;width:1px;height:20px;background:#e6e8eb"></div>
<div style="left:214px;top:285px;width:1px;height:20px;background:#e6e8eb"></div>
<div style="left:387px;top:285px;width:1px;height:20px;background:#e6e8eb"></div>
<div style="left:469px;top:285px;width:1px;height:20px;background:#e6e8eb"></div>
<div style="left:535px;top:285px;width:1px;height:20px;background:#e6e8eb"></div>
<div style="left:591px;top:285px;width:1px;height:20px;background:#e6e8eb"></div>
<div style="left:703px;top:285px;width:1px;height:20px;background:#e6e8eb"></div>
<div style="left:748px;top:285px;width:1px;height:20px;background:#e6e8eb"></div>
<div style="left:823px;top:285px;width:1px;height:20px;background:#e6e8eb"></div>
<div style="left:934px;top:285px;width:1px;height:20px;background:#e6e8eb"></div>
<div style="left:982px;top:285px;width:1px;height:20px;background:#e6e8eb"></div>
<div style="left:1012px;top:285px;width:1px;height:20px;background:#e6e8eb"></div>
<div style="left:1093px;top:285px;width:1px;height:20px;background:#e6e8eb"></div>
<div class="t" style="left:1013px;top:285px;width:76px;height:20px;line-height:20px;text-align:right;padding-right:4px;">GIZ_PO_0000210</div>
<div class="t" style="left:983px;top:285px;width:25px;height:20px;line-height:20px;text-align:right;padding-right:4px;direction:rtl;"><span class="a" style="transform:scaleX(0.82);transform-origin:100% 50%;">شراء</span></div>
<div class="t" style="left:935px;top:285px;width:43px;height:20px;line-height:20px;text-align:right;padding-right:4px;direction:rtl;"><span class="a" style="transform:scaleX(0.82);transform-origin:100% 50%;">فاتورة</span></div>
<div class="t" style="left:824px;top:285px;width:106px;height:20px;line-height:20px;text-align:right;padding-right:4px;"><span style="unicode-bidi:bidi-override;direction:ltr;letter-spacing:0.45px"><span class="a" style="transform:scaleX(0.82);transform-origin:100% 50%;">م</span> 02:50:41 24/03/2024</span></div>
<div class="t" style="left:749px;top:285px;width:70px;height:20px;line-height:20px;text-align:right;padding-right:4px;">00001</div>
<div class="t" style="left:704px;top:285px;width:40px;height:20px;line-height:20px;text-align:right;padding-right:4px;direction:rtl;"><span class="a" style="transform:scaleX(0.82);transform-origin:100% 50%;">ريحينا</span></div>
<div class="t" style="left:592px;top:285px;width:107px;height:20px;line-height:20px;text-align:right;padding-right:4px;">VSMW02</div>
<div class="t" style="left:536px;top:285px;width:51px;height:20px;line-height:20px;text-align:right;padding-right:4px;letter-spacing:0.25px;">60,000.48</div>
<div class="t" style="left:470px;top:285px;width:61px;height:20px;line-height:20px;text-align:right;padding-right:4px;letter-spacing:0.25px;">60,000.48</div>
<div style="left:81px;top:305px;width:1035px;height:20px;background:#f3f7fa"></div>
<div style="left:102px;top:305px;width:1px;height:20px;background:#e6e8eb"></div>
<div style="left:214px;top:305px;width:1px;height:20px;background:#e6e8eb"></div>
<div style="left:387px;top:305px;width:1px;height:20px;background:#e6e8eb"></div>
<div style="left:469px;top:305px;width:1px;height:20px;background:#e6e8eb"></div>
<div style="left:535px;top:305px;width:1px;height:20px;background:#e6e8eb"></div>
<div style="left:591px;top:305px;width:1px;height:20px;background:#e6e8eb"></div>
<div style="left:703px;top:305px;width:1px;height:20px;background:#e6e8eb"></div>
<div style="left:748px;top:305px;width:1px;height:20px;background:#e6e8eb"></div>
<div style="left:823px;top:305px;width:1px;height:20px;background:#e6e8eb"></div>
<div style="left:934px;top:305px;width:1px;height:20px;background:#e6e8eb"></div>
<div style="left:982px;top:305px;width:1px;height:20px;background:#e6e8eb"></div>
<div style="left:1012px;top:305px;width:1px;height:20px;background:#e6e8eb"></div>
<div style="left:1093px;top:305px;width:1px;height:20px;background:#e6e8eb"></div>
<div class="t" style="left:1013px;top:305px;width:76px;height:20px;line-height:20px;text-align:right;padding-right:4px;">CAI_PO_0000107</div>
<div class="t" style="left:983px;top:305px;width:25px;height:20px;line-height:20px;text-align:right;padding-right:4px;direction:rtl;"><span class="a" style="transform:scaleX(0.82);transform-origin:100% 50%;">شراء</span></div>
<div class="t" style="left:935px;top:305px;width:43px;height:20px;line-height:20px;text-align:right;padding-right:4px;direction:rtl;"><span class="a" style="transform:scaleX(0.82);transform-origin:100% 50%;">أمر مفتوح</span></div>
<div class="t" style="left:824px;top:305px;width:106px;height:20px;line-height:20px;text-align:right;padding-right:4px;"><span style="unicode-bidi:bidi-override;direction:ltr;letter-spacing:0.45px"><span class="a" style="transform:scaleX(0.82);transform-origin:100% 50%;">م</span> 12:49:12 29/02/2024</span></div>
<div class="t" style="left:749px;top:305px;width:70px;height:20px;line-height:20px;text-align:right;padding-right:4px;">00001</div>
<div class="t" style="left:704px;top:305px;width:40px;height:20px;line-height:20px;text-align:right;padding-right:4px;direction:rtl;"><span class="a" style="transform:scaleX(0.82);transform-origin:100% 50%;">ريحينا</span></div>
<div class="t" style="left:592px;top:305px;width:107px;height:20px;line-height:20px;text-align:right;padding-right:4px;">CF01-04</div>
<div class="t" style="left:536px;top:305px;width:51px;height:20px;line-height:20px;text-align:right;padding-right:4px;letter-spacing:0.25px;">307,076.00</div>
<div class="t" style="left:470px;top:305px;width:61px;height:20px;line-height:20px;text-align:right;padding-right:4px;letter-spacing:0.25px;">307,076.00</div>
<div style="left:81px;top:325px;width:1035px;height:15px;background:#d4e8f1"></div>
<div style="left:102px;top:325px;width:1px;height:15px;background:#7cc4d8"></div>
<div style="left:214px;top:325px;width:1px;height:15px;background:#c9e1ea"></div>
<div style="left:387px;top:325px;width:1px;height:15px;background:#7cc4d8"></div>
<div style="left:469px;top:325px;width:1px;height:15px;background:#c9e1ea"></div>
<div style="left:535px;top:325px;width:1px;height:15px;background:#c9e1ea"></div>
<div style="left:591px;top:325px;width:1px;height:15px;background:#c9e1ea"></div>
<div style="left:703px;top:325px;width:1px;height:15px;background:#c9e1ea"></div>
<div style="left:748px;top:325px;width:1px;height:15px;background:#c9e1ea"></div>
<div style="left:823px;top:325px;width:1px;height:15px;background:#c9e1ea"></div>
<div style="left:934px;top:325px;width:1px;height:15px;background:#c9e1ea"></div>
<div style="left:982px;top:325px;width:1px;height:15px;background:#c9e1ea"></div>
<div style="left:1012px;top:325px;width:1px;height:15px;background:#c9e1ea"></div>
<div style="left:1093px;top:325px;width:1px;height:15px;background:#c9e1ea"></div>
<div class="t" style="left:1013px;top:325px;width:76px;height:20px;line-height:20px;text-align:right;padding-right:4px;">RG_PO_0000011</div>
<div class="t" style="left:983px;top:325px;width:25px;height:20px;line-height:20px;text-align:right;padding-right:4px;direction:rtl;"><span class="a" style="transform:scaleX(0.82);transform-origin:100% 50%;">شراء</span></div>
<div class="t" style="left:935px;top:325px;width:43px;height:20px;line-height:20px;text-align:right;padding-right:4px;direction:rtl;"><span class="a" style="transform:scaleX(0.82);transform-origin:100% 50%;">أمر مفتوح</span></div>
<div class="t" style="left:824px;top:325px;width:106px;height:20px;line-height:20px;text-align:right;padding-right:4px;"><span style="unicode-bidi:bidi-override;direction:ltr;letter-spacing:0.45px"><span class="a" style="transform:scaleX(0.82);transform-origin:100% 50%;">م</span> 11:51:52 05/06/2024</span></div>
<div class="t" style="left:749px;top:325px;width:70px;height:20px;line-height:20px;text-align:right;padding-right:4px;">00001</div>
<div class="t" style="left:704px;top:325px;width:40px;height:20px;line-height:20px;text-align:right;padding-right:4px;direction:rtl;"><span class="a" style="transform:scaleX(0.82);transform-origin:100% 50%;">ريحينا</span></div>
<div class="t" style="left:592px;top:325px;width:107px;height:20px;line-height:20px;text-align:right;padding-right:4px;">CF01-04</div>
<div class="t" style="left:536px;top:325px;width:51px;height:20px;line-height:20px;text-align:right;padding-right:4px;letter-spacing:0.25px;">315.00</div>
<div class="t" style="left:470px;top:325px;width:61px;height:20px;line-height:20px;text-align:right;padding-right:4px;letter-spacing:0.25px;">315.00</div>
<div class="t" style="left:215px;top:325px;width:168px;height:20px;line-height:20px;text-align:right;padding-right:4px;direction:rtl;"><span class="a" style="transform:scaleX(0.89);transform-origin:100% 50%;">اذن رقم <span style="font-size:9px">1512</span> السائق حسين بتاريخ <span style="font-size:9px">6/6</span></span></div>
<svg style="position:absolute;left:1111px;top:328px" width="6" height="10" viewBox="0 0 6 10"><path d="M6 0v10L0 5z" fill="#7f8b97"/></svg>
<div style="left:81px;top:340.5px;width:1035px;height:19.5px;background:#eeeff1"></div>
<div style="left:81px;top:340px;width:1035px;height:1px;background:#dde0e4"></div>
<svg style="position:absolute;left:91px;top:347px" width="18" height="9" viewBox="0 0 18 9"><path d="M3.5 0.5v8L0 4.5zM6.8 0.5v8L3.3 4.5z" fill="#8895a3"/><path d="M17 0.5v8L11 4.5z" fill="#8895a3"/></svg>
<div class="t" style="left:115.5px;top:344px;width:8px;height:14px;line-height:14px;text-align:center;color:#222">8</div>
<div class="t" style="left:132.7px;top:344px;width:8px;height:14px;line-height:14px;text-align:center;color:#222">7</div>
<div class="t" style="left:150px;top:344px;width:8px;height:14px;line-height:14px;text-align:center;color:#222">6</div>
<div class="t" style="left:167.3px;top:344px;width:8px;height:14px;line-height:14px;text-align:center;color:#222">5</div>
<div class="t" style="left:184.5px;top:344px;width:8px;height:14px;line-height:14px;text-align:center;color:#222">4</div>
<div class="t" style="left:201.8px;top:344px;width:8px;height:14px;line-height:14px;text-align:center;color:#222">3</div>
<div class="t" style="left:219px;top:344px;width:8px;height:14px;line-height:14px;text-align:center;color:#222">2</div>
<div style="left:234px;top:344.5px;width:12.5px;height:13px;background:linear-gradient(180deg,#8494a4,#5f7183);border-radius:2px"></div>
<div class="t" style="left:234px;top:344.5px;width:12.5px;height:13px;line-height:13px;text-align:center;color:#fff">1</div>
<svg style="position:absolute;left:252px;top:347px" width="18" height="9" viewBox="0 0 18 9"><path d="M0.5 0.5v8L6 4.5z" fill="#ccd2d8"/><path d="M11 0.5v8L14.5 4.5zM14.2 0.5v8L17.7 4.5z" fill="#ccd2d8"/></svg>
<div style="left:67px;top:90px;width:14px;height:270px;background:#f0f2f4"></div>
<div style="left:67px;top:90px;width:14px;height:16px;background:linear-gradient(180deg,#f5f6f8,#e4e7eb)"></div>
<svg style="position:absolute;left:71.5px;top:95px" width="5" height="3" viewBox="0 0 5 3"><path d="M0 3L2.5 0 5 3z" fill="#222"/></svg>
<div style="left:67px;top:106px;width:14px;height:235px;background:linear-gradient(90deg,#b9c1ca 0%,#e9ecef 20%,#f7f8f9 55%,#dfe3e7 90%,#c5ccd3 100%);border-bottom:1px solid #b9c1ca;box-sizing:border-box"></div>
<div style="left:67px;top:341px;width:14px;height:19px;background:linear-gradient(180deg,#eef0f2,#e1e4e8)"></div>
<svg style="position:absolute;left:71.5px;top:351px" width="5" height="3" viewBox="0 0 5 3"><path d="M0 0h5L2.5 3z" fill="#222"/></svg>
<div style="left:2px;top:134px;width:59px;height:16px;background:linear-gradient(180deg,#fdfdfd 0%,#eef0f2 50%,#d9dde2 100%);border:1px solid #b5bdc6;border-radius:3px;box-sizing:border-box"></div>
<div class="t" style="left:2px;top:134px;width:59px;height:16px;line-height:16px;text-align:center;direction:rtl;color:#000"><span class="a" style="transform:scaleX(0.82);transform-origin:50% 50%;">الاستعلامات</span></div>
<div style="left:2px;top:156px;width:59px;height:16px;background:linear-gradient(180deg,#fdfdfd 0%,#eef0f2 50%,#d9dde2 100%);border:1px solid #b5bdc6;border-radius:3px;box-sizing:border-box"></div>
<div class="t" style="left:2px;top:156px;width:59px;height:16px;line-height:16px;text-align:center;direction:rtl;color:#000"><span class="a" style="transform:scaleX(0.82);transform-origin:50% 50%;">وظائف</span></div>
<div style="left:5px;top:89px;width:54px;height:13px;background:linear-gradient(180deg,#fdfdfd 0%,#eef0f2 50%,#d9dde2 100%);border:1px solid #b5bdc6;border-radius:3px;box-sizing:border-box"></div>
<div class="t" style="left:5px;top:89px;width:54px;height:13px;line-height:13px;text-align:center;direction:rtl;color:#000"><span class="a" style="transform:scaleX(0.82);transform-origin:50% 50%;">ترحيل</span></div>
<div style="left:5px;top:107px;width:71px;height:16px;background:#fff"></div>
<div style="left:5px;top:107px;width:17px;height:16px;background:#eff1f4"></div>
<div class="t" style="left:24px;top:106px;width:20px;height:16px;line-height:16px;text-align:center;direction:rtl"><span class="a" style="transform:scaleX(0.82);transform-origin:50% 50%;">تأكيد</span></div>
<div style="left:0;top:84px;width:64px;height:20px;border:5px solid #e30a0a;border-bottom:none;box-sizing:border-box"></div>
<div style="left:0;top:102px;width:81px;height:26px;border:5px solid #e30a0a;border-width:4.5px 5px 5px 5px;box-sizing:border-box"></div>
<div style="left:2px;top:365px;width:1120px;height:5px;background:#e7eaee"></div>
<div style="left:557px;top:367px;width:8px;height:1px;background:#6f7780"></div>
<div style="left:557px;top:369px;width:8px;height:1px;background:#c4c9cf"></div>
<div style="left:65px;top:387px;width:1056px;height:230px;border:1px solid #c9d0d7;border-top-color:#dde1e6;border-radius:4px 0 0 0;box-sizing:border-box;background:#fff"></div>
<div style="left:1094px;top:368px;width:27px;height:20px;background:#fff;border:1px solid #b9c1ca;border-bottom:none;border-radius:3px 3px 0 0;box-sizing:border-box"></div>
<div class="t" style="left:1094px;top:367px;width:27px;height:20px;line-height:20px;text-align:center;direction:rtl"><span class="a" style="transform:scaleX(0.82);transform-origin:50% 50%;font-size:7.6px">سطر</span></div>
<div style="left:1073px;top:370px;width:21px;height:17px;background:linear-gradient(180deg,#f7f8fa 0%,#e9ecef 55%,#d3d8de 100%);border:1px solid #b3bbc4;border-bottom:none;border-radius:3px 3px 0 0;box-sizing:border-box"></div>
<div class="t" style="left:1073px;top:370px;width:21px;height:17px;line-height:17px;text-align:center;direction:rtl"><span class="a" style="transform:scaleX(0.82);transform-origin:50% 50%;font-size:7.6px">عام</span></div>
<div style="left:1001px;top:370px;width:71px;height:17px;background:linear-gradient(180deg,#f7f8fa 0%,#e9ecef 55%,#d3d8de 100%);border:1px solid #b3bbc4;border-bottom:none;border-radius:3px 3px 0 0;box-sizing:border-box"></div>
<div class="t" style="left:1001px;top:370px;width:71px;height:17px;line-height:17px;text-align:center;direction:rtl"><span class="a" style="transform:scaleX(0.82);transform-origin:50% 50%;font-size:7.6px">ضرائب/رسوم متنوعة</span></div>
<div style="left:969px;top:370px;width:31px;height:17px;background:linear-gradient(180deg,#f7f8fa 0%,#e9ecef 55%,#d3d8de 100%);border:1px solid #b3bbc4;border-bottom:none;border-radius:3px 3px 0 0;box-sizing:border-box"></div>
<div class="t" style="left:969px;top:370px;width:31px;height:17px;line-height:17px;text-align:center;direction:rtl"><span class="a" style="transform:scaleX(0.82);transform-origin:50% 50%;font-size:7.6px">الكميات</span></div>
<div style="left:918px;top:370px;width:50px;height:17px;background:linear-gradient(180deg,#f7f8fa 0%,#e9ecef 55%,#d3d8de 100%);border:1px solid #b3bbc4;border-bottom:none;border-radius:3px 3px 0 0;box-sizing:border-box"></div>
<div class="t" style="left:918px;top:370px;width:50px;height:17px;line-height:17px;text-align:center;direction:rtl"><span class="a" style="transform:scaleX(0.82);transform-origin:50% 50%;font-size:7.6px">أبعاد المخزون</span></div>
<div style="left:890px;top:370px;width:28px;height:17px;background:linear-gradient(180deg,#f7f8fa 0%,#e9ecef 55%,#d3d8de 100%);border:1px solid #b3bbc4;border-bottom:none;border-radius:3px 3px 0 0;box-sizing:border-box"></div>
<div class="t" style="left:890px;top:370px;width:28px;height:17px;line-height:17px;text-align:center;direction:rtl"><span class="a" style="transform:scaleX(0.82);transform-origin:50% 50%;font-size:7.6px">التاريخ</span></div>
<div style="left:68px;top:391px;width:1049px;height:211px;border:1px solid #a3aebb;box-sizing:border-box;background:#fff"></div>
<div style="left:69px;top:392px;width:1047px;height:20px;background:linear-gradient(180deg,#fafbfc 0%,#eff1f3 42%,#e3e6e9 58%,#d5d9de 100%)"></div>
<div style="left:69px;top:412px;width:1047px;height:19px;background:#d5e9f2"></div>
<div style="left:168px;top:392px;width:1px;height:20px;background:#d3d7dc"></div>
<div style="left:168px;top:412px;width:1px;height:19px;background:#7cc4d8"></div>
<div style="left:265px;top:392px;width:1px;height:20px;background:#d3d7dc"></div>
<div style="left:265px;top:412px;width:1px;height:19px;background:#c3dde7"></div>
<div style="left:377px;top:392px;width:1px;height:20px;background:#d3d7dc"></div>
<div style="left:377px;top:412px;width:1px;height:19px;background:#7cc4d8"></div>
<div style="left:424px;top:392px;width:1px;height:20px;background:#d3d7dc"></div>
<div style="left:424px;top:412px;width:1px;height:19px;background:#c3dde7"></div>
<div style="left:537px;top:392px;width:1px;height:20px;background:#d3d7dc"></div>
<div style="left:537px;top:412px;width:1px;height:19px;background:#7cc4d8"></div>
<div style="left:650px;top:392px;width:1px;height:20px;background:#d3d7dc"></div>
<div style="left:650px;top:412px;width:1px;height:19px;background:#c3dde7"></div>
<div style="left:683px;top:392px;width:1px;height:20px;background:#d3d7dc"></div>
<div style="left:683px;top:412px;width:1px;height:19px;background:#c3dde7"></div>
<div style="left:748px;top:392px;width:1px;height:20px;background:#d3d7dc"></div>
<div style="left:748px;top:412px;width:1px;height:19px;background:#c3dde7"></div>
<div style="left:861px;top:392px;width:1px;height:20px;background:#d3d7dc"></div>
<div style="left:861px;top:412px;width:1px;height:19px;background:#7cc4d8"></div>
<div style="left:973px;top:392px;width:1px;height:20px;background:#d3d7dc"></div>
<div style="left:973px;top:412px;width:1px;height:19px;background:#c3dde7"></div>
<div style="left:1003px;top:392px;width:1px;height:20px;background:#d3d7dc"></div>
<div style="left:1003px;top:412px;width:1px;height:19px;background:#c3dde7"></div>
<div class="t" style="left:73px;top:391px;width:99px;height:19px;line-height:19px;text-align:center;direction:rtl"><span class="a" style="transform:scaleX(0.82);transform-origin:50% 50%;">ضرائب لا تؤثر في التكلفة الفعلية</span></div>
<div class="t" style="left:172px;top:391px;width:97px;height:19px;line-height:19px;text-align:center;direction:rtl"><span class="a" style="transform:scaleX(0.82);transform-origin:50% 50%;">ضرائب تؤثر في التكلفة الفعلية</span></div>
<div class="t" style="left:269px;top:391px;width:112px;height:19px;line-height:19px;text-align:center;direction:rtl"><span class="a" style="transform:scaleX(0.82);transform-origin:50% 50%;">كود الضريبة</span></div>
<div class="t" style="left:381px;top:391px;width:47px;height:19px;line-height:19px;text-align:center;direction:rtl"><span class="a" style="transform:scaleX(0.82);transform-origin:50% 50%;">سعر الوحدة</span></div>
<div class="t" style="left:428px;top:391px;width:113px;height:19px;line-height:19px;text-align:center;direction:rtl"><span class="a" style="transform:scaleX(0.82);transform-origin:50% 50%;">وحدة قياس</span></div>
<div class="t" style="left:541px;top:391px;width:113px;height:19px;line-height:19px;text-align:center;direction:rtl"><span class="a" style="transform:scaleX(0.82);transform-origin:50% 50%;">كود السبب</span></div>
<div class="t" style="left:654px;top:391px;width:33px;height:19px;line-height:19px;text-align:center;direction:rtl"><span class="a" style="transform:scaleX(0.82);transform-origin:50% 50%;">الكمية</span></div>
<div class="t" style="left:687px;top:391px;width:65px;height:19px;line-height:19px;text-align:center;direction:rtl">BINLocation</div>
<div class="t" style="left:752px;top:391px;width:113px;height:19px;line-height:19px;text-align:center;direction:rtl"><span class="a" style="transform:scaleX(0.82);transform-origin:50% 50%;">مجموعة</span></div>
<div class="t" style="left:865px;top:391px;width:112px;height:19px;line-height:19px;text-align:center;direction:rtl"><span class="a" style="transform:scaleX(0.82);transform-origin:50% 50%;">مخزن</span></div>
<div class="t" style="left:977px;top:391px;width:30px;height:19px;line-height:19px;text-align:center;direction:rtl"><span class="a" style="transform:scaleX(0.82);transform-origin:50% 50%;">الإسم</span></div>
<div class="t" style="left:1007px;top:391px;width:113px;height:19px;line-height:19px;text-align:center;direction:rtl"><span class="a" style="transform:scaleX(0.82);transform-origin:50% 50%;">رقم الصنف</span></div>
<div class="t" style="left:70px;top:412px;width:94px;height:19px;line-height:19px;text-align:right;padding-right:4px;">0.00</div>
<div class="t" style="left:169px;top:412px;width:92px;height:19px;line-height:19px;text-align:right;padding-right:4px;">0.00</div>
<div class="t" style="left:266px;top:412px;width:107px;height:19px;line-height:19px;text-align:right;padding-right:4px;">TAX00</div>
<div class="t" style="left:378px;top:412px;width:42px;height:19px;line-height:19px;text-align:right;padding-right:4px;">315.00</div>
<div class="t" style="left:425px;top:412px;width:108px;height:19px;line-height:19px;text-align:right;padding-right:4px;">CRT</div>
<div class="t" style="left:651px;top:412px;width:28px;height:19px;line-height:19px;text-align:right;padding-right:4px;">1</div>
<div class="t" style="left:684px;top:412px;width:60px;height:19px;line-height:19px;text-align:right;padding-right:4px;">0</div>
<div class="t" style="left:862px;top:412px;width:107px;height:19px;line-height:19px;text-align:right;padding-right:4px;">CF01-04</div>
<div class="t" style="left:974px;top:412px;width:25px;height:19px;line-height:19px;text-align:right;padding-right:4px;direction:rtl;"><span class="a" style="transform:scaleX(0.95);transform-origin:100% 50%;font-size:8px">لبلوبه ـ</span></div>
<div class="t" style="left:1004px;top:412px;width:108px;height:19px;line-height:19px;text-align:right;padding-right:4px;">FS100000003</div>
<div style="left:1003px;top:430px;width:113px;height:1px;background:#8fc3d6"></div>
<div style="left:69px;top:586px;width:1047px;height:15px;background:linear-gradient(180deg,#e3e7eb,#eef1f3)"></div>
<div style="left:69px;top:586px;width:1047px;height:1px;background:#c9d0d7"></div>
<svg style="position:absolute;left:74px;top:591px" width="4" height="6" viewBox="0 0 4 6"><path d="M4 0v6L0 3z" fill="#222"/></svg>
<div style="left:356px;top:587px;width:747px;height:14px;background:linear-gradient(180deg,#fdfdfd 0%,#f0f2f3 45%,#d3d8dc 100%);border:1px solid #9aa6b1;border-top-color:#c5ccd3;border-radius:3px;box-sizing:border-box"></div>
<svg style="position:absolute;left:1108px;top:591px" width="4" height="6" viewBox="0 0 4 6"><path d="M0 0v6L4 3z" fill="#222"/></svg>
<div style="left:2px;top:378px;width:59px;height:17px;background:linear-gradient(180deg,#fdfdfd 0%,#eef0f2 50%,#d9dde2 100%);border:1px solid #b5bdc6;border-radius:3px;box-sizing:border-box"></div>
<div class="t" style="left:2px;top:378px;width:59px;height:17px;line-height:17px;text-align:center;direction:rtl;color:#000"><span class="a" style="transform:scaleX(0.82);transform-origin:50% 50%;">إعدادات</span></div>
<div style="left:2px;top:396px;width:59px;height:16px;background:linear-gradient(180deg,#fdfdfd 0%,#eef0f2 50%,#d9dde2 100%);border:1px solid #b5bdc6;border-radius:3px;box-sizing:border-box"></div>
<div class="t" style="left:2px;top:396px;width:59px;height:16px;line-height:16px;text-align:center;direction:rtl;color:#9aa3ad"><span class="a" style="transform:scaleX(0.82);transform-origin:50% 50%;">وظائف</span></div>
<div style="left:2px;top:417px;width:59px;height:17px;background:linear-gradient(180deg,#fdfdfd 0%,#eef0f2 50%,#d9dde2 100%);border:1px solid #b5bdc6;border-radius:3px;box-sizing:border-box"></div>
<div class="t" style="left:2px;top:417px;width:59px;height:17px;line-height:17px;text-align:center;direction:rtl;color:#000"><span class="a" style="transform:scaleX(0.82);transform-origin:50% 50%;">الاستعلامات</span></div>
<div style="left:39px;top:481px;width:23px;height:22px;border:1px solid #b9c0c8;border-radius:3px;background:linear-gradient(180deg,#fafbfc,#dfe3e7);box-sizing:border-box"></div>
<svg style="position:absolute;left:41.5px;top:483px" width="18" height="18" viewBox="0 0 18 18"><defs><linearGradient id="cg13" x1="0" y1="0" x2="0" y2="1"><stop offset="0" stop-color="#a6caec"/><stop offset="0.55" stop-color="#cce4f6"/><stop offset="1" stop-color="#eaf6fd"/></linearGradient><linearGradient id="cs13" x1="0" y1="0" x2="0" y2="1"><stop offset="0" stop-color="#86acd6"/><stop offset="1" stop-color="#3d6fac"/></linearGradient></defs><circle cx="9" cy="9" r="8.2" fill="url(#cg13)" stroke="url(#cs13)" stroke-width="1.1"/><path d="M8 4.7h2v3.3h3.3v2H10v3.3H8V10H4.7V8H8z" fill="#2f9e1c"/></svg>
<div style="left:39px;top:504px;width:23px;height:22px;border:1px solid #b9c0c8;border-radius:3px;background:linear-gradient(180deg,#fafbfc,#dfe3e7);box-sizing:border-box"></div>
<svg style="position:absolute;left:41.5px;top:506px" width="18" height="18" viewBox="0 0 18 18"><defs><linearGradient id="cg14" x1="0" y1="0" x2="0" y2="1"><stop offset="0" stop-color="#a6caec"/><stop offset="0.55" stop-color="#cce4f6"/><stop offset="1" stop-color="#eaf6fd"/></linearGradient><linearGradient id="cs14" x1="0" y1="0" x2="0" y2="1"><stop offset="0" stop-color="#86acd6"/><stop offset="1" stop-color="#3d6fac"/></linearGradient></defs><circle cx="9" cy="9" r="8.2" fill="url(#cg14)" stroke="url(#cs14)" stroke-width="1.1"/><rect x="5.4" y="8.1" width="7.2" height="2" fill="#e4151f"/></svg>
<div style="left:1125px;top:305px;width:1px;height:8px;background:#a0a7af"></div>
<div style="left:1128px;top:305px;width:1px;height:8px;background:#a0a7af"></div>
<div style="left:0;top:0;width:260px;height:2px;overflow:hidden"><div class="t" style="position:absolute;left:17px;top:-7.5px;color:#f2f2f2;font-size:10px;letter-spacing:0.2px">www.&nbsp;&nbsp;&nbsp;&nbsp;&nbsp;&nbsp;&nbsp;&nbsp;&nbsp;&nbsp;&nbsp;&nbsp;&nbsp;&nbsp;&nbsp;&nbsp;&nbsp;&nbsp;&nbsp;&nbsp;&nbsp;&nbsp;&nbsp;&nbsp;&nbsp;&nbsp;&nbsp;&nbsp;&nbsp;&nbsp;&nbsp;&nbsp;&nbsp;y&nbsp;&nbsp;&nbsp;&nbsp;&nbsp;&nbsp;&nbsp;&nbsp;&nbsp;&nbsp;&nbsp;www.nnnnnnnnnnnn.y&nbsp;&nbsp;j</div></div></body></html>
